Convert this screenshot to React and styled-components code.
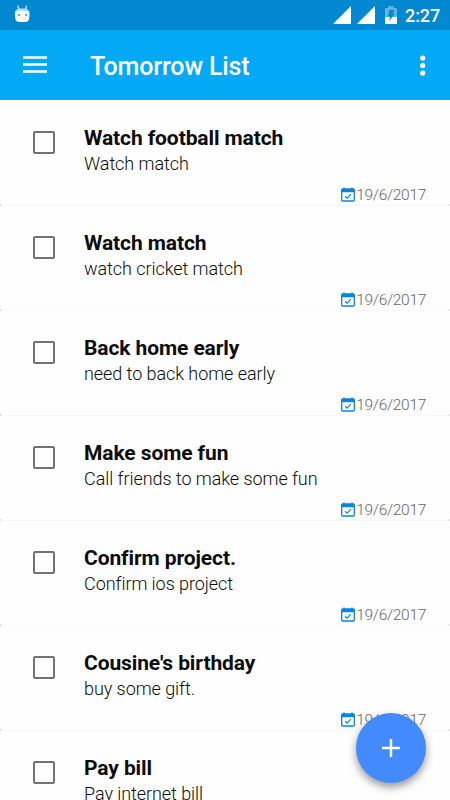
import styled, { createGlobalStyle } from 'styled-components';

const tasks = [
  { title: 'Watch football match', note: 'Watch match', date: '19/6/2017' },
  { title: 'Watch match', note: 'watch cricket match', date: '19/6/2017' },
  { title: 'Back home early', note: 'need to back home early', date: '19/6/2017' },
  { title: 'Make some fun', note: 'Call friends to make some fun', date: '19/6/2017' },
  { title: 'Confirm project.', note: 'Confirm ios project', date: '19/6/2017' },
  { title: "Cousine's birthday", note: 'buy some gift.', date: '19/6/2017' },
  { title: 'Pay bill', note: 'Pay internet bill' },
];

function DebugIcon() {
  return (
    <svg width="16" height="18" viewBox="0 0 16 18">
      <path d="M3.8 0.5 L4.8 4 M12.6 0.5 L11.6 4" stroke="#cfe8f7" strokeWidth="1.2" />
      <path d="M2 6.5 Q2.3 3.5 5 3.5 H11.4 Q14.1 3.5 14.4 6.5 Z" fill="#b9def4" />
      <path
        d="M1.2 6 H15.2 Q15.8 9 15.2 13 Q14.7 17 11.2 17 H5.2 Q1.7 17 1.2 13 Q0.6 9 1.2 6 Z"
        fill="#fff"
      />
      <rect x="4" y="9" width="2" height="2" fill="#5aaee0" />
      <rect x="11" y="9" width="2" height="2" fill="#5aaee0" />
    </svg>
  );
}

function SignalIcon() {
  return (
    <svg width="18" height="18" viewBox="0 0 18 18">
      <path d="M18 0 V18 H0 Z" fill="#fff" />
    </svg>
  );
}

function BatteryIcon() {
  return (
    <svg width="12" height="18" viewBox="0 0 12 18">
      <path d="M3.2 0 H8.8 V2 H12 V11 H0 V2 H3.2 Z" fill="#5fb3e0" />
      <path d="M0 11 H12 V18 H0 Z" fill="#fff" />
      <path d="M4.6 4 H9.4 L7.8 7.6 H9.8 L4.2 15.2 L5.2 10.4 H2.8 Z" fill="#0288d1" />
    </svg>
  );
}

function CalendarIcon() {
  return (
    <svg width="14" height="15" viewBox="0 0 14 15">
      <path
        d="M1.8 2 H12.2 Q13.3 2 13.3 3 V13 Q13.3 14 12.2 14 H1.8 Q0.7 14 0.7 13 V3 Q0.7 2 1.8 2 Z"
        fill="#fff"
        stroke="#0e84d8"
        strokeWidth="1.3"
      />
      <path d="M0.6 2 H13.4 V5.2 H0.6 Z M2.3 0.6 H3.7 V2 H2.3 Z M10.3 0.6 H11.7 V2 H10.3 Z" fill="#0e84d8" />
      <path d="M4.1 9.2 L6.1 11.1 L9.9 7.2" fill="none" stroke="#0e84d8" strokeWidth="1.2" />
    </svg>
  );
}

function TaskItem({ title, note, date }) {
  return (
    <TaskRow>
      <CheckBox />
      <TaskBody>
        <TaskTitle>{title}</TaskTitle>
        <TaskNote>{note}</TaskNote>
        {date && (
          <TaskDate>
            <CalendarIcon />
            <span>{date}</span>
          </TaskDate>
        )}
      </TaskBody>
    </TaskRow>
  );
}

export default function App() {
  return (
    <Screen>
      <GlobalStyle />
      <StatusBar>
        <DebugIcon />
        <StatusIcons>
          <SignalIcon />
          <SignalIcon />
          <BatterySlot>
            <BatteryIcon />
          </BatterySlot>
          <Clock>2:27</Clock>
        </StatusIcons>
      </StatusBar>
      <AppBar>
        <MenuButton aria-label="menu">
          <svg width="24" height="18" viewBox="0 0 24 18">
            <path d="M0 0.2 H24 V2.8 H0 Z M0 7.2 H24 V9.8 H0 Z M0 14.2 H24 V16.8 H0 Z" fill="#fff" />
          </svg>
        </MenuButton>
        <AppTitle>Tomorrow List</AppTitle>
        <MoreButton aria-label="more">
          <svg width="6" height="21" viewBox="0 0 6 21">
            <circle cx="2.7" cy="3" r="2.6" fill="#fff" />
            <circle cx="2.7" cy="10.5" r="2.6" fill="#fff" />
            <circle cx="2.7" cy="18" r="2.6" fill="#fff" />
          </svg>
        </MoreButton>
      </AppBar>
      <TaskList>
        {tasks.map((task) => (
          <TaskItem key={task.title} {...task} />
        ))}
      </TaskList>
      <AddButton aria-label="add">
        <svg width="18" height="18" viewBox="0 0 18 18">
          <path d="M9 0 V18 M0 9 H18" stroke="#fff" strokeWidth="2.4" />
        </svg>
      </AddButton>
    </Screen>
  );
}

const GlobalStyle = createGlobalStyle`
  * {
    box-sizing: border-box;
  }

  body {
    margin: 0;
    background-color: #fefefe;
    font-family: Roboto, 'Liberation Sans', sans-serif;
  }
`;

const Screen = styled.div`
  position: relative;
  display: flex;
  flex-direction: column;
  width: 450px;
  height: 800px;
  overflow: hidden;
  background-color: #fefefe;
`;

const StatusBar = styled.div`
  display: flex;
  flex-shrink: 0;
  align-items: center;
  justify-content: space-between;
  height: 30px;
  padding: 0 10px 0 14px;
  background-color: #0288d1;

  svg {
    display: block;
  }

  & > svg {
    margin-bottom: 2px;
  }
`;

const StatusIcons = styled.div`
  display: flex;
  align-items: center;
  gap: 6px;
`;

const BatterySlot = styled.div`
  margin-left: 4px;
`;

const Clock = styled.span`
  width: 35px;
  margin-left: 2px;
  padding-top: 1px;
  color: #fff;
  font-size: 18px;
  font-weight: 500;
  line-height: 29px;
  letter-spacing: -0.1px;
  white-space: nowrap;
`;

const AppBar = styled.header`
  display: flex;
  flex-shrink: 0;
  align-items: center;
  height: 70px;
  padding: 0 24px 0 23px;
  background-color: #03a9f5;
`;

const IconButton = styled.button`
  display: flex;
  padding: 0;
  border: none;
  background: none;
`;

const MenuButton = styled(IconButton)`
  width: 67px;
`;

const MoreButton = styled(IconButton)`
  margin-left: auto;
`;

const AppTitle = styled.h1`
  margin: 4px 0 0;
  color: #fff;
  font-size: 25px;
  font-weight: 500;
  line-height: 30px;
  letter-spacing: -0.12px;
`;

const TaskList = styled.ul`
  flex: 1;
  min-height: 0;
  margin: 0;
  padding: 1px 0 0;
  overflow: hidden;
  list-style: none;
`;

const TaskRow = styled.li`
  position: relative;
  display: flex;
  height: 105px;
  padding: 0 24px 0 33px;
  border-bottom: 1px solid #f8f8f8;

  /* card corners that show at both ends of the divider */
  &::before,
  &::after {
    content: '';
    position: absolute;
    bottom: -1px;
    width: 1px;
    height: 2px;
    background-color: #d8d8d8;
  }

  &::before {
    left: 0;
  }

  &::after {
    right: 0;
  }
`;

const CheckBox = styled.span`
  flex-shrink: 0;
  width: 22px;
  height: 23px;
  margin-top: 30px;
  border: 2px solid #727272;
  border-radius: 2px;
`;

const TaskBody = styled.div`
  display: flex;
  flex: 1;
  flex-direction: column;
  padding: 24px 0 0 29px;
`;

const TaskTitle = styled.h2`
  margin: 0;
  color: #0c0c0c;
  font-size: 21px;
  font-weight: 700;
  line-height: 26px;
  letter-spacing: -0.1px;
`;

const TaskNote = styled.p`
  margin: 0;
  color: #0c0c0c;
  font-size: 18px;
  font-weight: 300;
  line-height: 26px;
  letter-spacing: -0.06px;
`;

const TaskDate = styled.div`
  display: flex;
  align-items: center;
  align-self: flex-end;
  gap: 1.5px;
  margin-top: 7px;
  color: #666;
  font-size: 15.5px;
  font-weight: 300;
  line-height: 20px;
  letter-spacing: -0.3px;

  span {
    padding-top: 1px;
  }
`;

const AddButton = styled.button`
  position: absolute;
  right: 24px;
  bottom: 17px;
  display: flex;
  align-items: center;
  justify-content: center;
  width: 70px;
  height: 70px;
  padding: 0;
  border: none;
  border-radius: 50%;
  background-color: #448aff;
  box-shadow: 0 4px 9px rgba(0, 0, 0, 0.42);
`;
